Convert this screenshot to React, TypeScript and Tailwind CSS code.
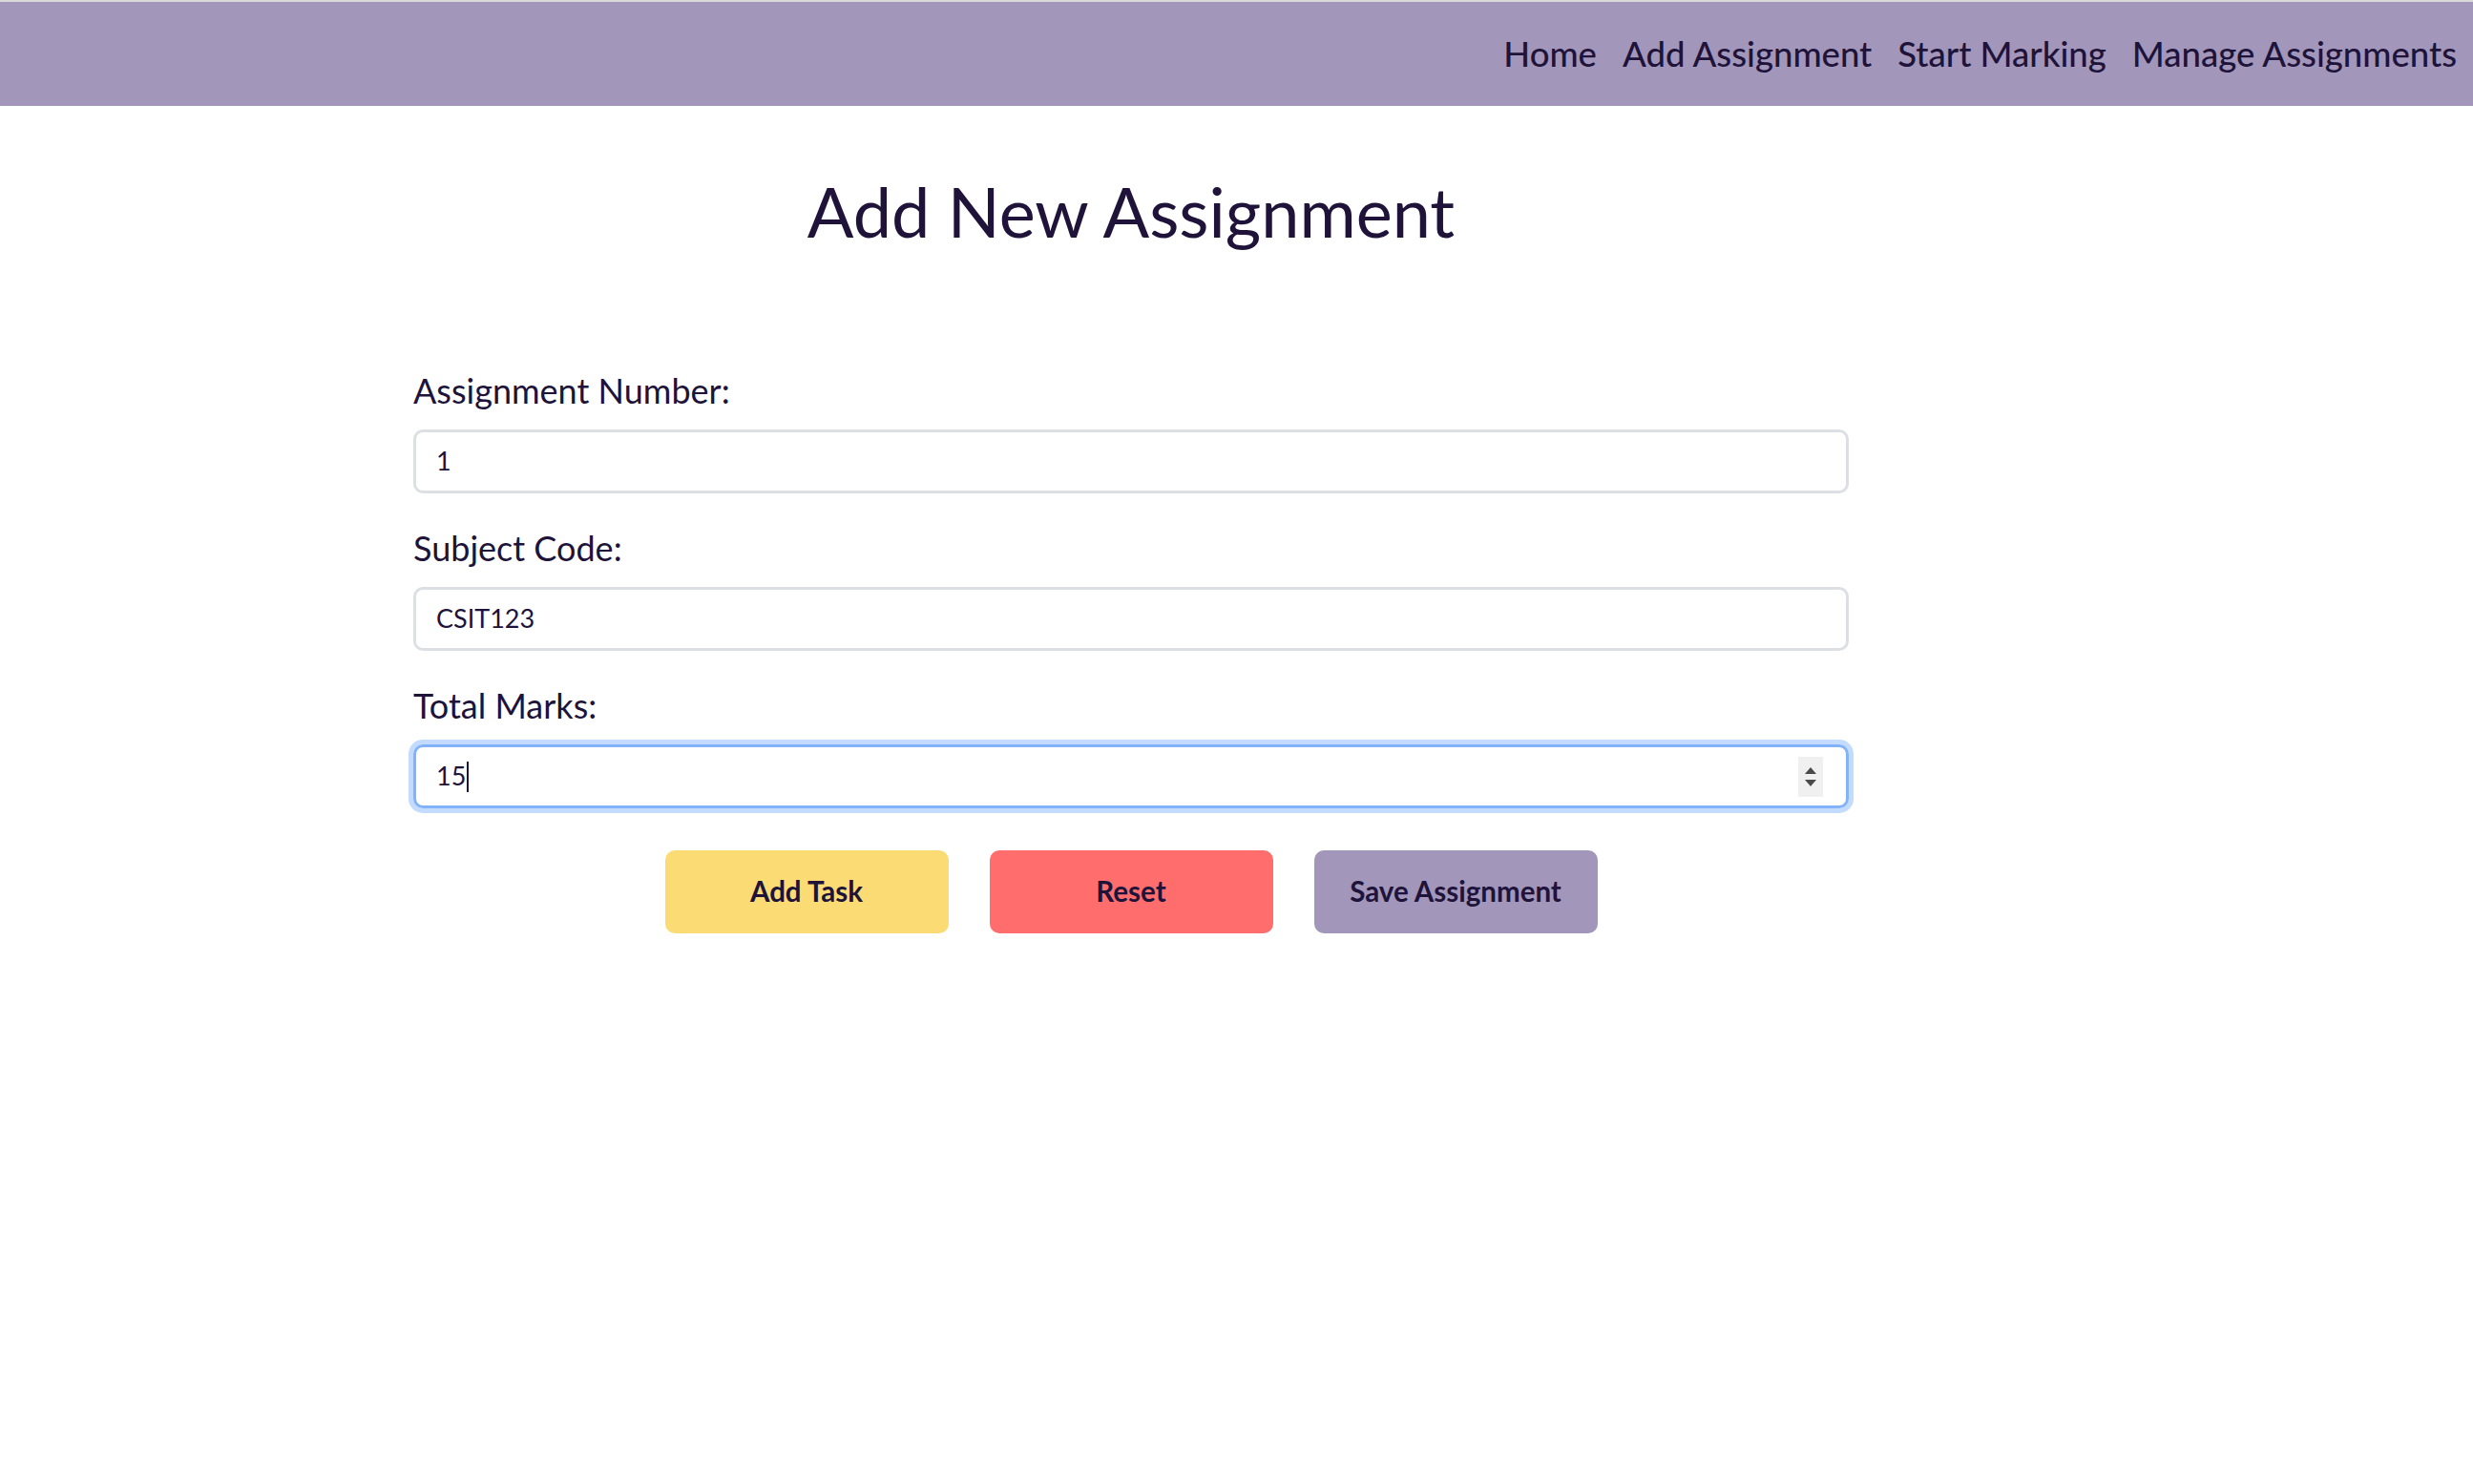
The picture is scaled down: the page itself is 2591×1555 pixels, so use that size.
import React from 'react';

const font = { fontFamily: 'Lato, "Noto Sans", sans-serif' };

const fields = [
  { label: 'Assignment Number:', value: '1' },
  { label: 'Subject Code:', value: 'CSIT123' },
];

export default function App() {
  return (
    <div className="min-h-screen bg-white text-[#20133a]" style={font}>
      <div className="h-[2px] bg-[#d9d9d9]" />
      <nav className="h-[109px] bg-[#a297bb] flex items-center justify-end gap-[27px] pr-[17px]">
        <a className="text-[36.5px] font-medium">Home</a>
        <a className="text-[36.5px] font-medium">Add Assignment</a>
        <a className="text-[36.5px] font-medium">Start Marking</a>
        <a className="text-[36.5px] font-medium">Manage Assignments</a>
      </nav>

      <main className="ml-[433px] w-[1504px]">
        <h1 className="text-center text-[72px] leading-none font-normal pt-[74px]">Add New Assignment</h1>

        <form className="mt-[130px] flex flex-col">
          {fields.map((f) => (
            <div key={f.label} className="flex flex-col mb-[35px]">
              <label className="text-[36px] leading-[44px] mb-[19px]">{f.label}</label>
              <div className="h-[67px] border-[3px] border-[#dcdfe4] rounded-[10px] flex items-center pl-[21px] text-[27px]">
                {f.value}
              </div>
            </div>
          ))}

          <div className="flex flex-col">
            <label className="text-[36px] leading-[44px] mb-[19px]">Total Marks:</label>
            <div className="h-[67px] border-[3px] border-[#82b2fa] rounded-[10px] shadow-[0_0_0_5px_#c3dbfe] flex items-center pl-[21px] pr-[24px] text-[27px]">
              <span>15</span>
              <span className="w-[2px] h-[32px] bg-[#20133a] ml-[1px]" />
              <div className="ml-auto w-[26px] h-[42px] bg-[#f0f0f0] flex flex-col items-center justify-center gap-[6px]">
                <svg width="12" height="7" viewBox="0 0 12 7"><path d="M6 0L12 7H0z" fill="#4a4a4a" /></svg>
                <svg width="12" height="7" viewBox="0 0 12 7"><path d="M0 0H12L6 7z" fill="#4a4a4a" /></svg>
              </div>
            </div>
          </div>

          <div className="flex justify-center gap-[43px] mt-[44px]">
            <button type="button" className="w-[297px] h-[87px] rounded-[10px] bg-[#fbdc74] text-[29.5px] font-bold">Add Task</button>
            <button type="button" className="w-[297px] h-[87px] rounded-[10px] bg-[#ff6e6d] text-[29.5px] font-bold">Reset</button>
            <button type="button" className="w-[297px] h-[87px] rounded-[10px] bg-[#a297bb] text-[29.5px] font-bold">Save Assignment</button>
          </div>
        </form>
      </main>
    </div>
  );
}
